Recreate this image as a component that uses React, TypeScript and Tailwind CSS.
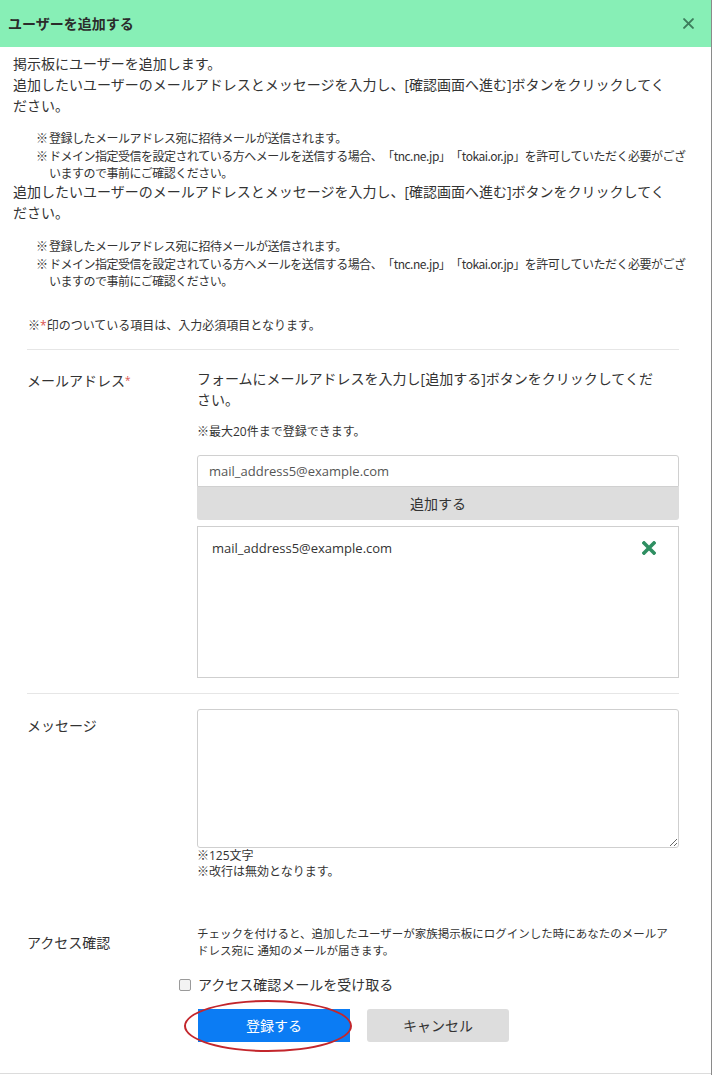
function Notes({ className }: { className: string }) {
  return (
    <ul
      className={`${className} pl-[23px] text-[12px] leading-[17px] flex flex-col gap-[1px] whitespace-nowrap font-['Noto_Sans_CJK_JP',sans-serif] tracking-[-0.5px]`}
    >
      <li className="flex">
        <span className="w-[13px] shrink-0">※</span>
        <span>登録したメールアドレス宛に招待メールが送信されます。</span>
      </li>
      <li className="flex">
        <span className="w-[13px] shrink-0">※</span>
        <span>
          ドメイン指定受信を設定されている方へメールを送信する場合、「tnc.ne.jp」「tokai.or.jp」を許可していただく必要がござ
          <br />
          いますので事前にご確認ください。
        </span>
      </li>
    </ul>
  );
}

export default function App() {
  return (
    <div className="min-h-screen bg-white font-['Open_Sans','Noto_Sans_CJK_JP',sans-serif] text-[#333] [text-spacing-trim:space-all]">
      <div className="w-[712px] h-[1075px] border-r border-[#8a8a8a] flex flex-col">
        <div className="relative h-[1074px] border-b border-[#dcdcdc]">
          {/* Header */}
          <div className="h-[47px] bg-[#87efb6] flex items-center justify-between pl-[8px] pr-[17px]">
            <h1 className="text-[14px] font-bold text-[#2b2b2b] leading-none">ユーザーを追加する</h1>
            <svg width="11" height="11" viewBox="0 0 10 10" stroke="#3d7d5c" strokeWidth="1.8" strokeLinecap="round">
              <path d="M1 1L9 9M9 1L1 9" />
            </svg>
          </div>

          {/* Intro */}
          <div className="pt-[6px] px-[13px]">
            <p className="text-[14px] leading-[21px] whitespace-nowrap">
              掲示板にユーザーを追加します。
              <br />
              追加したいユーザーのメールアドレスとメッセージを入力し、[確認画面へ進む]ボタンをクリックしてく
              <br />
              ださい。
            </p>
            <Notes className="mt-[13px]" />
            <p className="text-[14px] leading-[21px] whitespace-nowrap">
              追加したいユーザーのメールアドレスとメッセージを入力し、[確認画面へ進む]ボタンをクリックしてく
              <br />
              ださい。
            </p>
            <Notes className="mt-[14px]" />
            <p className="mt-[28px] ml-[15px] text-[12px] leading-[17px]">
              ※<span className="text-[#d9534f]">*</span>印のついている項目は、入力必須項目となります。
            </p>
          </div>

          {/* Form */}
          <div className="ml-[27px] w-[652px] mt-[15px]">
            {/* Mail address */}
            <div className="border-t border-[#e6e6e6] pt-[18px] pb-[15px] grid grid-cols-[170px_1fr]">
              <div className="pt-[2px] text-[14px] leading-[21px]">
                メールアドレス<span className="text-[#d9534f] text-[10px] align-top">*</span>
              </div>
              <div>
                <p className="text-[14px] leading-[21px] whitespace-nowrap">
                  フォームにメールアドレスを入力し[追加する]ボタンをクリックしてくだ
                  <br />
                  さい。
                </p>
                <p className="mt-[13px] text-[12px] leading-[17px]">※最大20件まで登録できます。</p>
                <input
                  type="text"
                  defaultValue="mail_address5@example.com"
                  className="mt-[15px] w-full h-[32px] px-[11px] border border-[#d0d0d0] rounded-t-[3px] text-[13px] text-[#555] outline-none"
                />
                <button className="w-full h-[33px] bg-[#dddddd] rounded-b-[3px] text-[14px] text-[#333]">
                  追加する
                </button>
                <div className="mt-[6px] h-[152px] border border-[#cfcfcf] px-[14px] pt-[11px]">
                  <div className="flex items-center justify-between">
                    <span className="text-[13px] leading-[20px] text-[#333]">mail_address5@example.com</span>
                    <svg width="14" height="14" viewBox="0 0 14 14" className="mr-[8px]">
                      <path
                        d="M2 2L12 12M12 2L2 12"
                        stroke="#2f8f62"
                        strokeWidth="3.6"
                        strokeLinecap="square"
                      />
                    </svg>
                  </div>
                </div>
              </div>
            </div>

            {/* Message */}
            <div className="border-t border-[#e6e6e6] pt-[15px] grid grid-cols-[170px_1fr]">
              <div className="pt-[6px] text-[14px] leading-[21px]">メッセージ</div>
              <div>
                <textarea className="block w-full h-[139px] border border-[#cfcfcf] rounded-[3px] outline-none" />
                <p className="text-[12px] leading-[16px]">
                  ※125文字
                  <br />
                  ※改行は無効となります。
                </p>
              </div>
            </div>

            {/* Access */}
            <div className="mt-[45px] grid grid-cols-[170px_1fr] items-center">
              <div className="text-[14px] leading-[21px]">アクセス確認</div>
              <p className="text-[11.5px] leading-[17px] whitespace-nowrap">
                チェックを付けると、追加したユーザーが家族掲示板にログインした時にあなたのメールア
                <br />
                ドレス宛に 通知のメールが届きます。
              </p>
            </div>

            <label className="mt-[15px] ml-[152px] flex items-center gap-[7px] h-[21px]">
              <input
                type="checkbox"
                className="appearance-none w-[12px] h-[12px] border border-[#9a9a9a] rounded-[2px] bg-[#f3f3f3]"
              />
              <span className="text-[14px] leading-[21px]">アクセス確認メールを受け取る</span>
            </label>

            <div className="mt-[14px] ml-[171px] flex gap-[17px]">
              <div className="relative">
                <button className="w-[152px] h-[33px] bg-[#0b7cf4] text-white text-[14px]">登録する</button>
                <div className="absolute -left-[14px] -top-[9px] w-[168px] h-[52px] rounded-[50%] border-2 border-[#c3262c] pointer-events-none" />
              </div>
              <button className="w-[142px] h-[33px] bg-[#dddddd] rounded-[3px] text-[14px] text-[#333]">
                キャンセル
              </button>
            </div>
          </div>
        </div>
      </div>
    </div>
  );
}
